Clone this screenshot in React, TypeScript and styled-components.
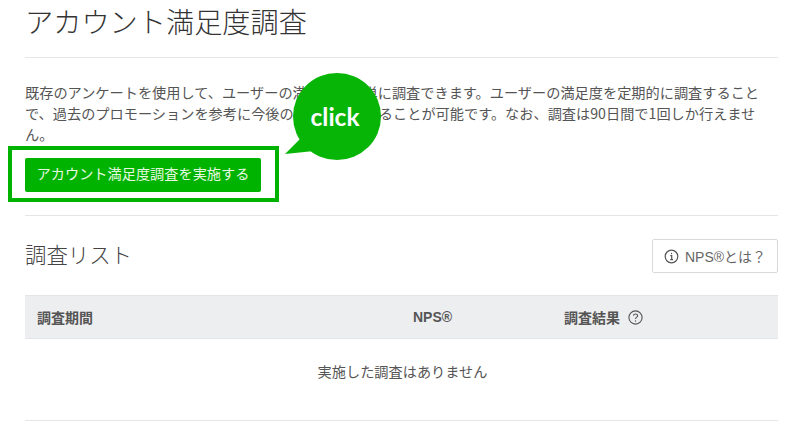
import React from "react";
import styled, { createGlobalStyle } from "styled-components";

const Global = createGlobalStyle`
  html, body { margin: 0; padding: 0; background: #fff; }
  body { font-family: "Noto Sans CJK JP", "Liberation Sans", sans-serif; color: #555; overflow: hidden; }
`;
const Page = styled.div`
  position: relative;
  width: 798px;
  height: 438px;
  padding: 0 20px 0 25px;
  box-sizing: border-box;
`;
const TitleBar = styled.header`
  height: 57px;
  border-bottom: 1px solid #e6e6e6;
`;
const Title = styled.h1`
  margin: 0;
  font-size: 28.2px;
  font-weight: 300;
  line-height: 42px;
  color: #333;
`;
const Intro = styled.section`
  padding: 24px 0 23px;
  border-bottom: 1px solid #e6e6e6;
`;
const Lead = styled.p`
  margin: 0 0 13px;
  width: 745px;
  font-size: 14.2px;
  line-height: 21px;
  color: #555;
`;
const Primary = styled.button`
  display: block;
  width: 236px;
  height: 34px;
  padding: 0 0 3px;
  border: 0;
  border-radius: 2px;
  background: #00b300;
  color: #e8f8e0;
  font: 400 14.2px/31px "Noto Sans CJK JP", sans-serif;
`;
const SubHeader = styled.div`
  display: flex;
  justify-content: space-between;
  align-items: center;
  margin-top: 23px;
  height: 34px;
`;
const SubTitle = styled.h2`
  margin: 0 0 6px;
  font-size: 21.4px;
  font-weight: 300;
  color: #444;
`;
const Ghost = styled.button`
  display: flex;
  align-items: center;
  justify-content: center;
  gap: 6px;
  width: 126px;
  height: 34px;
  padding: 0;
  border: 1px solid #d9d9d9;
  border-radius: 2px;
  background: #fff;
  color: #666;
  font: 400 14px "Liberation Sans", "Noto Sans CJK JP", sans-serif;
`;
const Table = styled.div`
  margin-top: 22px;
  border-bottom: 1px solid #e6e6e6;
`;
const HeadRow = styled.div`
  display: grid;
  grid-template-columns: 376px 151px 1fr;
  align-items: center;
  height: 44px;
  padding-left: 12px;
  background: #edeef0;
  border-top: 1px solid #e4e5e8;
  border-bottom: 1px solid #e4e5e8;
  box-sizing: border-box;
`;
const HeadCell = styled.div`
  display: flex;
  align-items: center;
  gap: 8px;
  font-size: 14px;
  font-weight: 700;
  color: #555;
  font-family: "Liberation Sans", "Noto Sans CJK JP", sans-serif;
`;
const Empty = styled.div`
  height: 81px;
  display: flex;
  align-items: center;
  justify-content: center;
  padding: 0 0 18px 2px;
  box-sizing: border-box;
  font-size: 14.2px;
  color: #555;
`;
const Highlight = styled.div`
  position: absolute;
  left: 8px;
  top: 146px;
  width: 271px;
  height: 56px;
  border: 4px solid #00b300;
  box-sizing: border-box;
`;
const Bubble = styled.div`
  position: absolute;
  left: 284px;
  top: 73px;
  width: 98px;
  height: 88px;
`;
const BubbleShape = styled.svg`
  display: block;
`;
const BubbleLabel = styled.span`
  position: absolute;
  left: 7px;
  top: 0;
  width: 88px;
  height: 86px;
  display: flex;
  align-items: center;
  justify-content: center;
  color: #fff;
  font: 700 24.5px Lato, "Noto Sans", sans-serif;
`;

const InfoIcon = () => (
  <svg width="15" height="15" viewBox="0 0 15 15" fill="none" stroke="#555" strokeWidth="1.2">
    <circle cx="7.5" cy="7.5" r="6.3" />
    <path d="M6.3 6.7H7.7V10.6M6.2 10.6H9" />
    <circle cx="7.5" cy="4.5" r="0.7" fill="#555" stroke="none" />
  </svg>
);
const QuestionIcon = () => (
  <svg width="15" height="15" viewBox="0 0 15 15" fill="none" stroke="#555" strokeWidth="1.1">
    <circle cx="7.5" cy="7.5" r="6.6" />
    <path d="M5.5 5.8C5.6 3.3 9.6 3.4 9.6 5.7C9.6 7.2 7.5 7.2 7.5 9.1" />
    <circle cx="7.5" cy="11" r="0.7" fill="#555" stroke="none" />
  </svg>
);

export default function App() {
  return (
    <Page>
      <Global />
      <TitleBar>
        <Title>アカウント満足度調査</Title>
      </TitleBar>
      <Intro>
        <Lead>
          既存のアンケートを使用して、ユーザーの満足度を簡単に調査できます。ユーザーの満足度を定期的に調査することで、過去のプロモーションを参考に今後の施策を検討することが可能です。なお、調査は90日間で1回しか行えません。
        </Lead>
        <Primary>アカウント満足度調査を実施する</Primary>
      </Intro>
      <SubHeader>
        <SubTitle>調査リスト</SubTitle>
        <Ghost>
          <InfoIcon />
          NPS®とは？
        </Ghost>
      </SubHeader>
      <Table>
        <HeadRow>
          <HeadCell>調査期間</HeadCell>
          <HeadCell>NPS®</HeadCell>
          <HeadCell>
            調査結果
            <QuestionIcon />
          </HeadCell>
        </HeadRow>
        <Empty>実施した調査はありません</Empty>
      </Table>
      <Highlight />
      <Bubble>
        <BubbleShape width="98" height="88" viewBox="0 0 98 88">
          <ellipse cx="53" cy="43.5" rx="44" ry="43.5" fill="#07b507" />
          <path d="M1 81L16 66L30 78Z" fill="#07b507" />
        </BubbleShape>
        <BubbleLabel>click</BubbleLabel>
      </Bubble>
    </Page>
  );
}
